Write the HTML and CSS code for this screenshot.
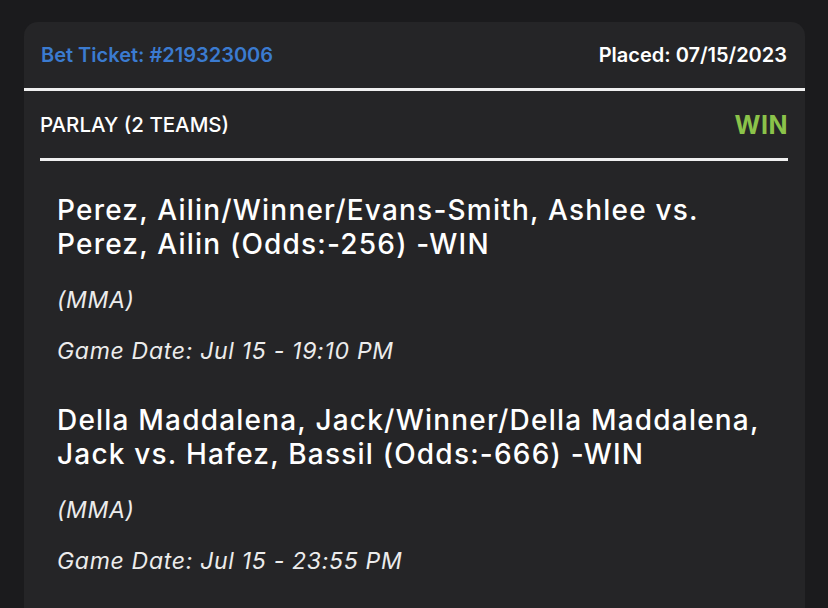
FILE: index.html
```html
<!DOCTYPE html>
<html lang="en">
<head>
  <meta charset="UTF-8" />
  <meta name="viewport" content="width=device-width, initial-scale=1.0"/>
  <title>Bet Ticket #219323006</title>
  <link rel="stylesheet" href="styles.css">
</head>
<body>
  <div class="ticket">
    <div class="ticket-head">
      <span class="ticket-id">Bet Ticket: #219323006</span>
      <span class="ticket-date">Placed: 07/15/2023</span>
    </div>

    <div class="ticket-body">
      <div class="bet-type">
        <span class="bet-name">PARLAY (2 TEAMS)</span>
        <span class="bet-result">WIN</span>
      </div>

      <div class="legs">
        <div class="leg">
          <h3>Perez, Ailin/Winner/Evans-Smith, Ashlee vs. Perez, Ailin (Odds:-256) -WIN</h3>
          <p class="sport">(MMA)</p>
          <p class="game-date">Game Date: Jul 15 - 19:10 PM</p>
        </div>
        <div class="leg">
          <h3>Della Maddalena, Jack/Winner/Della Maddalena, Jack vs. Hafez, Bassil (Odds:-666) -WIN</h3>
          <p class="sport">(MMA)</p>
          <p class="game-date">Game Date: Jul 15 - 23:55 PM</p>
        </div>
      </div>
    </div>
  </div>
</body>
</html>
```

FILE: styles.css
```css
body {
  margin: 0;
  padding: 22px 23px 0 24px;
  background: #1b1b1d;
  font-family: Inter, "Open Sans", sans-serif;
  color: #fff;
  overflow: hidden;
}

.ticket {
  background: #252527;
  border-radius: 14px;
  padding-bottom: 80px;
}

.ticket-head {
  display: flex;
  justify-content: space-between;
  align-items: center;
  height: 66px;
  padding: 0 18px 0 17px;
  border-bottom: 3px solid #f0f0f0;
  font-size: 20px;
  font-weight: 600;
  line-height: 24px;
}

.ticket-id {
  color: #3b7bd0;
}

.ticket-body {
  padding: 0 17px 0 16px;
}

.bet-type {
  display: flex;
  justify-content: space-between;
  align-items: center;
  height: 67px;
  border-bottom: 3px solid #f0f0f0;
  line-height: 26px;
}

.bet-name {
  font-size: 20.5px;
  font-weight: 500;
}

.bet-result {
  color: #8bc34a;
  font-size: 25px;
  font-weight: 700;
  letter-spacing: 0.5px;
}

.legs {
  display: flex;
  flex-direction: column;
  gap: 37px;
  padding: 32px 0 0 17px;
}

.leg h3 {
  margin: 0;
  max-width: 720px;
  font-size: 28px;
  font-weight: 500;
  letter-spacing: 1.2px;
  line-height: 34px;
}

.leg p {
  margin: 0;
  font-size: 23px;
  font-style: italic;
  font-weight: 400;
  letter-spacing: 0.7px;
  line-height: 30px;
  color: #ececec;
}

.leg .sport {
  margin-top: 24px;
}

.leg .game-date {
  margin-top: 21px;
}
```
